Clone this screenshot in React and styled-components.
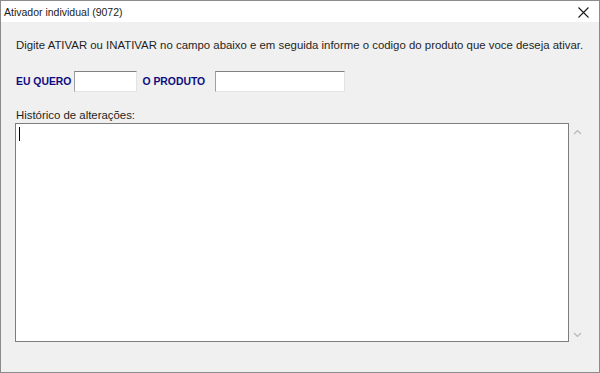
import React from 'react';
import styled, { createGlobalStyle } from 'styled-components';

const GlobalStyle = createGlobalStyle`
  html, body {
    margin: 0;
    padding: 0;
    background: #f0f0f0;
  }
  * { box-sizing: border-box; }
`

export default class App extends React.Component {
  renderChevron = (dir) => {
    return (
      <svg width="9" height="6" viewBox="0 0 9 6">
        <path
          d={dir === 'up' ? 'M1 5 L4.5 1.5 L8 5' : 'M1 1 L4.5 4.5 L8 1'}
          fill="none"
          stroke="#b8b8b8"
          strokeWidth="1.2"
        />
      </svg>
    )
  }

  render() {
    return (
      <Window>
        <GlobalStyle />
        <TitleBar>
          <TitleText>Ativador individual (9072)</TitleText>
          <CloseButton>
            <svg width="11" height="11" viewBox="0 0 11 11">
              <path d="M0.5 0.5 L10.5 10.5 M10.5 0.5 L0.5 10.5" stroke="#1a1a1a" strokeWidth="1.1" />
            </svg>
          </CloseButton>
        </TitleBar>
        <Body>
          <Instruction>
            Digite ATIVAR ou INATIVAR no campo abaixo e em seguida informe o codigo do produto que voce deseja ativar.
          </Instruction>
          <FormRow>
            <FieldLabel>EU QUERO</FieldLabel>
            <TextInput width={63} />
            <FieldLabel spaced>O PRODUTO</FieldLabel>
            <TextInput width={130} />
          </FormRow>
          <HistoryLabel>Histórico de alterações:</HistoryLabel>
          <HistoryBox>
            <HistoryArea>
              <Caret />
            </HistoryArea>
            <ScrollBar>
              {this.renderChevron('up')}
              {this.renderChevron('down')}
            </ScrollBar>
          </HistoryBox>
        </Body>
      </Window>
    )
  }
}

const Window = styled.div`
  width: 600px;
  height: 373px;
  border: 1px solid #8c8c8c;
  background: #f0f0f0;
  display: flex;
  flex-direction: column;
  overflow: hidden;
`

const TitleBar = styled.div`
  height: 21px;
  background: #ffffff;
  display: flex;
  align-items: center;
  justify-content: space-between;
  padding-left: 3px;
  padding-right: 10px;
`

const TitleText = styled.div`
  font-family: 'Liberation Sans', Arial, sans-serif;
  font-size: 10.5px;
  color: #1a1a1a;
`

const CloseButton = styled.div`
  display: flex;
  align-items: center;
  padding-top: 1px;
`

const Body = styled.div`
  flex: 1;
  display: flex;
  flex-direction: column;
  padding: 0 13px 0 14px;
`

const Instruction = styled.div`
  margin-top: 15px;
  height: 16px;
  line-height: 16px;
  padding-left: 1px;
  font-family: 'Liberation Sans', Arial, sans-serif;
  font-size: 11.4px;
  color: #1f1f1f;
  white-space: nowrap;
`

const FormRow = styled.div`
  margin-top: 18px;
  height: 21px;
  display: flex;
  align-items: center;
`

const FieldLabel = styled.div`
  font-family: 'Liberation Sans', Arial, sans-serif;
  font-weight: bold;
  font-size: 10.4px;
  color: #0d0d80;
  padding-left: ${props => props.spaced ? '5px' : '1px'};
  margin-right: ${props => props.spaced ? '10px' : '3px'};
  white-space: nowrap;
`

const TextInput = styled.div`
  width: ${props => props.width}px;
  height: 21px;
  background: #ffffff;
  border-top: 1px solid #828282;
  border-left: 1px solid #a0a0a0;
  border-right: 1px solid #e3e3e3;
  border-bottom: 1px solid #e3e3e3;
`

const HistoryLabel = styled.div`
  margin-top: 13px;
  height: 18px;
  padding-left: 1px;
  line-height: 20px;
  font-family: 'Liberation Sans', Arial, sans-serif;
  font-size: 11.4px;
  color: #1f1f1f;
`

const HistoryBox = styled.div`
  display: flex;
  height: 219px;
`

const HistoryArea = styled.div`
  width: 556px;
  height: 100%;
  background: #ffffff;
  border: 1px solid #7d7d7d;
  padding: 3px 0 0 3px;
`

const Caret = styled.div`
  width: 1px;
  height: 14px;
  background: #000000;
`

const ScrollBar = styled.div`
  width: 17px;
  height: 100%;
  display: flex;
  flex-direction: column;
  justify-content: space-between;
  align-items: center;
  padding: 6px 0 4px 0;
`
